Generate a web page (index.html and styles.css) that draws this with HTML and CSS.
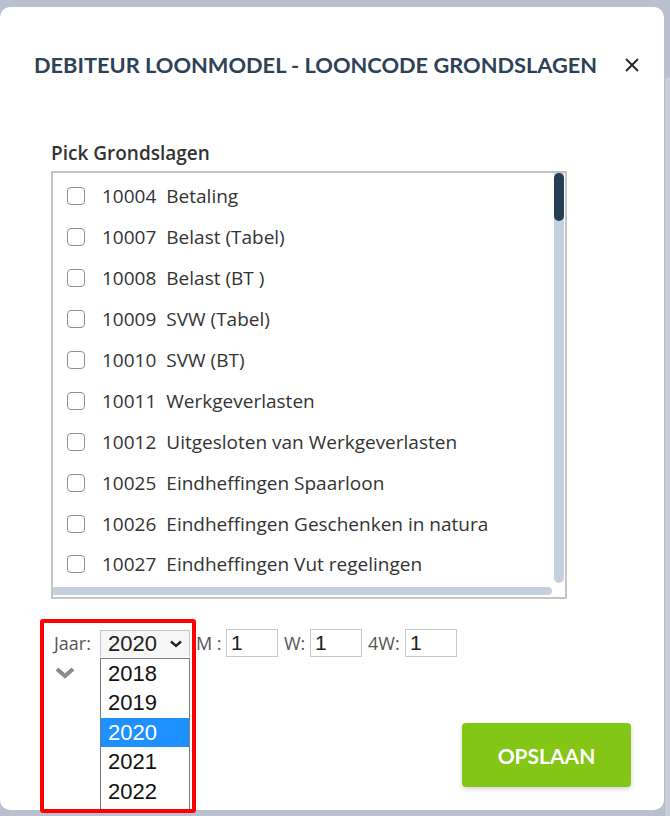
FILE: index.html
```html
<!DOCTYPE html>
<html lang="nl">
<head>
<meta charset="utf-8">
<title>Debiteur Loonmodel - Looncode Grondslagen</title>
<link rel="stylesheet" href="styles.css">
</head>
<body>
<div class="page">
  <div class="dialog">
    <div class="header">
      <h1 class="title">DEBITEUR LOONMODEL - LOONCODE GRONDSLAGEN</h1>
      <button class="close" aria-label="Sluiten">
        <svg width="16" height="16" viewBox="0 0 16 16"><path d="M2 2 L14 14 M14 2 L2 14" stroke="#222" stroke-width="1.8" fill="none"/></svg>
      </button>
    </div>
    <div class="body">
      <div class="label">Pick Grondslagen</div>
      <div class="listbox">
        <div class="list">
          <div class="row"><span class="cb"></span><span class="code">10004</span><span>Betaling</span></div>
          <div class="row"><span class="cb"></span><span class="code">10007</span><span>Belast (Tabel)</span></div>
          <div class="row"><span class="cb"></span><span class="code">10008</span><span>Belast (BT )</span></div>
          <div class="row"><span class="cb"></span><span class="code">10009</span><span>SVW (Tabel)</span></div>
          <div class="row"><span class="cb"></span><span class="code">10010</span><span>SVW (BT)</span></div>
          <div class="row"><span class="cb"></span><span class="code">10011</span><span>Werkgeverlasten</span></div>
          <div class="row"><span class="cb"></span><span class="code">10012</span><span>Uitgesloten van Werkgeverlasten</span></div>
          <div class="row"><span class="cb"></span><span class="code">10025</span><span>Eindheffingen Spaarloon</span></div>
          <div class="row"><span class="cb"></span><span class="code">10026</span><span>Eindheffingen Geschenken in natura</span></div>
          <div class="row"><span class="cb"></span><span class="code">10027</span><span>Eindheffingen Vut regelingen</span></div>
        </div>
        <div class="vscroll"><div class="vthumb"></div></div>
        <div class="hscroll"></div>
        <div class="corner"></div>
      </div>
      <div class="controls">
        <span class="clabel l-jaar">Jaar:</span>
        <div class="select">
          <span>2020</span>
          <svg width="14" height="10" viewBox="0 0 14 10"><path d="M2 2.5 L7 7 L12 2.5" stroke="#222" stroke-width="2.4" fill="none"/></svg>
          <div class="dropdown">
            <div class="opt">2018</div>
            <div class="opt">2019</div>
            <div class="opt sel">2020</div>
            <div class="opt">2021</div>
            <div class="opt">2022</div>
          </div>
        </div>
        <span class="clabel l-m">M :</span>
        <input class="num" value="1">
        <span class="clabel l-w">W:</span>
        <input class="num" value="1">
        <span class="clabel l-4w">4W:</span>
        <input class="num" value="1">
        <div class="highlight"></div>
      </div>
      <div class="chev">
        <svg width="22" height="14" viewBox="0 0 22 14"><path d="M3 3 L11 10 L19 3" stroke="#8a8a8a" stroke-width="4" fill="none"/></svg>
      </div>
      <div class="footer">
        <button class="save">OPSLAAN</button>
      </div>
    </div>
  </div>
  <div class="side"></div>
</div>
</body>
</html>
```
FILE: styles.css
```css
html, body {
  margin: 0;
  padding: 0;
}
body {
  background: #b9c0d0;
  width: 670px;
  height: 816px;
  overflow: hidden;
  font-family: "Open Sans", "Noto Sans", sans-serif;
}
.page {
  display: flex;
  padding-top: 7px;
  height: 809px;
}
.dialog {
  width: 664px;
  height: 803px;
  background: #fff;
  border-radius: 10px;
  box-sizing: border-box;
  flex: none;
}
.side {
  flex: 1;
  background: #c9cdd9;
  border-left: 1px solid #b3bac8;
  margin-top: 71px;
}
.header {
  display: flex;
  align-items: center;
  padding: 45px 0 0 34px;
  height: 26px;
}
.title {
  margin: 0;
  font-family: Lato, "Noto Sans", sans-serif;
  font-size: 21.8px;
  line-height: 26px;
  font-weight: 700;
  color: #2c4257;
  white-space: nowrap;
}
.close {
  margin-left: auto;
  margin-right: 24px;
  border: 0;
  background: none;
  padding: 0;
  width: 16px;
  height: 16px;
  display: flex;
}
.body {
  padding: 0 0 0 51px;
}
.label {
  margin-top: 63px;
  font-size: 19px;
  line-height: 24px;
  color: #333;
  font-weight: 600;
}
.listbox {
  margin-top: 6px;
  width: 516px;
  height: 428px;
  box-sizing: border-box;
  border: 2px solid #c4c4c4;
  display: grid;
  grid-template-columns: 1fr 13px;
  grid-template-rows: 1fr 12px;
  overflow: hidden;
}
.list {
  overflow: hidden;
  padding-top: 3px;
}
.row {
  height: 40.9px;
  display: flex;
  align-items: center;
  padding-left: 14px;
  font-size: 19px;
  color: #333;
  white-space: nowrap;
}
.cb {
  width: 16px;
  height: 16px;
  border: 1.5px solid #8f8f8f;
  border-radius: 4px;
  margin-right: 17px;
  flex: none;
}
.code {
  margin-right: 10px;
}
.vscroll {
  background: #c5d0de;
  border-radius: 0 0 5px 5px;
  margin: 0 1px 2px 2px;
}
.vthumb {
  height: 48px;
  background: #243e56;
  border-radius: 5px;
}
.hscroll {
  background: #c5d0de;
  margin: 2px 0 2px 0;
  border-radius: 0 5px 5px 0;
}
.corner {
  background: #fff;
}
.controls {
  margin-top: 30px;
  display: flex;
  align-items: center;
  height: 28px;
  position: relative;
  font-size: 18px;
  color: #555;
}
.clabel {
  flex: none;
  white-space: nowrap;
}
.l-jaar { width: 49px; padding-left: 3px; box-sizing: border-box; }
.l-m { width: 30px; margin-left: 6px; }
.l-w { width: 26px; }
.l-4w { width: 37px; }
.select {
  position: relative;
  width: 90px;
  height: 27px;
  flex: none;
  box-sizing: border-box;
  border: 1px solid #c8c8c8;
  border-bottom: 0;
  background: #f6f6f6;
  display: flex;
  align-items: center;
  justify-content: space-between;
  padding: 0 6px 0 7px;
  font-family: "Liberation Sans", Arial, sans-serif;
  font-size: 22px;
  color: #222;
}
.dropdown {
  position: absolute;
  top: 27px;
  left: -1px;
  width: 90px;
  box-sizing: border-box;
  border: 1px solid #7a7a7a;
  background: #fff;
  padding-bottom: 3px;
  z-index: 2;
}
.opt {
  height: 29.5px;
  line-height: 29.5px;
  padding-left: 7px;
  color: #111;
}
.opt.sel {
  background: #1e90ff;
  color: #fff;
}
.num {
  width: 52px;
  height: 28px;
  flex: none;
  box-sizing: border-box;
  border: 1px solid #c8c8c8;
  padding: 0 4px;
  font-family: "Liberation Sans", Arial, sans-serif;
  font-size: 21px;
  color: #222;
  margin: 0 6px 0 0;
  outline: none;
}
.highlight {
  position: absolute;
  left: -11px;
  top: -10px;
  width: 156px;
  height: 194px;
  box-sizing: border-box;
  border: 4px solid #ff0000;
  border-radius: 3px;
  z-index: 3;
  pointer-events: none;
}
.chev {
  margin: 9px 0 0 3px;
  height: 14px;
  display: flex;
}
.footer {
  display: flex;
  justify-content: flex-end;
  padding-right: 33px;
  margin-top: 43px;
}
.save {
  width: 169px;
  height: 64px;
  border: 0;
  border-radius: 4px;
  background: #84c616;
  color: #fff;
  font-family: Lato, "Noto Sans", sans-serif;
  font-weight: 700;
  font-size: 21px;
  box-shadow: 0 2px 5px rgba(0,0,0,0.18);
}
```
